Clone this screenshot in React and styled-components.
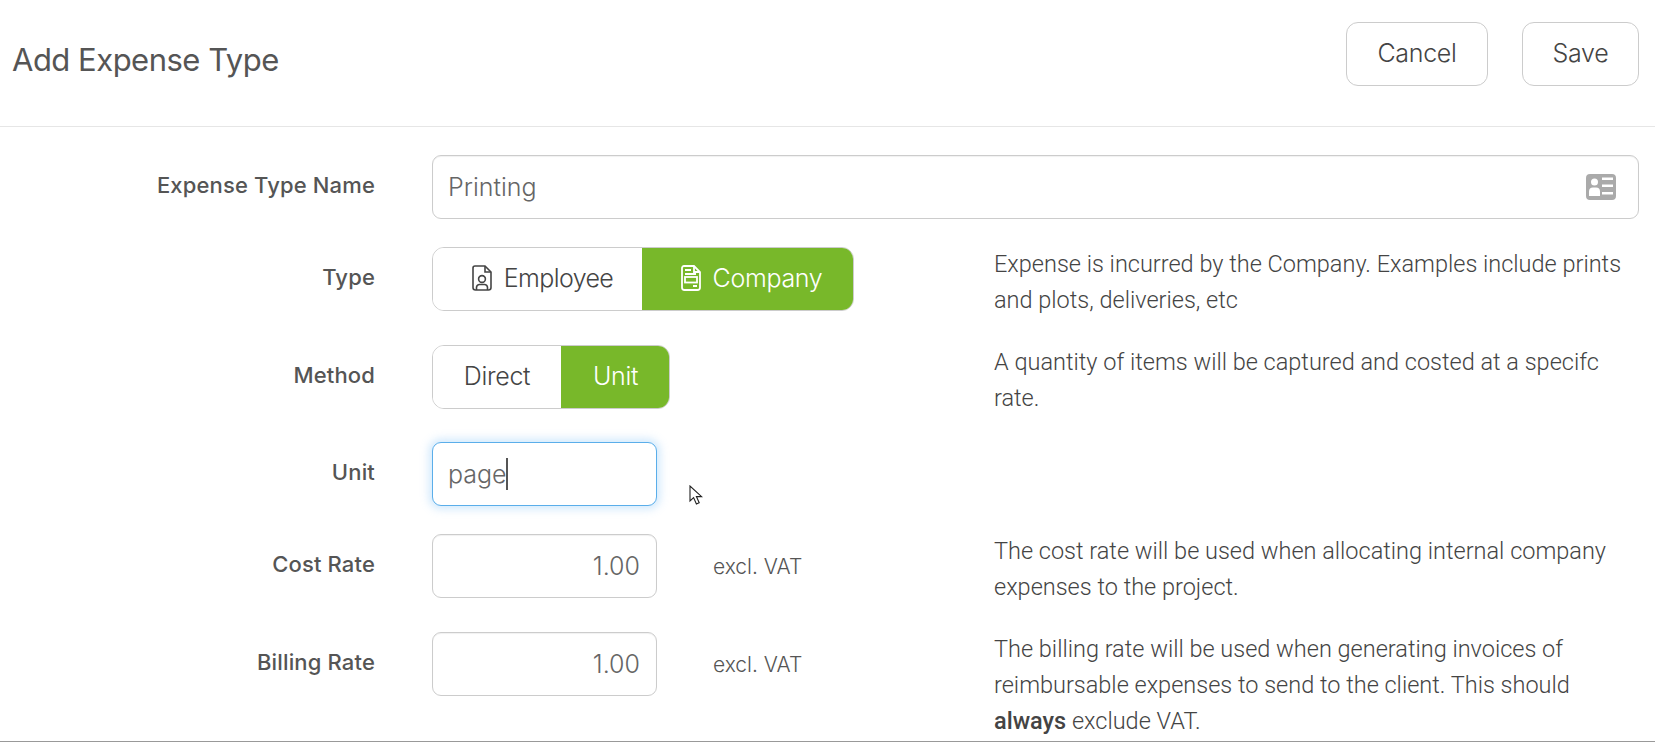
import React from 'react';
import styled, { createGlobalStyle } from 'styled-components';

const GlobalStyle = createGlobalStyle`
	html, body {
		margin: 0;
		padding: 0;
		background: #fff;
	}
	body {
		font-family: 'Inter', 'Liberation Sans', sans-serif;
		color: #555;
	}
`;

const Page = styled.div`
	position: relative;
	width: 1655px;
	height: 742px;
	box-sizing: border-box;
	border-bottom: 1px solid #999;
	overflow: hidden;
`;
const Header = styled.header`
	display: flex;
	align-items: flex-start;
	justify-content: space-between;
	height: 127px;
	box-sizing: border-box;
	padding: 22px 16px 0 12px;
	border-bottom: 1px solid #e6e6e6;
`;
const Title = styled.h1`
	margin: 16px 0 0;
	font-family: 'Inter', sans-serif;
	font-size: 31px;
	line-height: 44px;
	font-weight: 400;
	letter-spacing: -0.5px;
	color: #555;
`;
const Actions = styled.div`
	display: flex;
	gap: 34px;
`;
const HeaderButton = styled.button`
	width: ${props => props.$width}px;
	height: 64px;
	padding: 0 0 2px;
	box-sizing: border-box;
	border: 1px solid #ccc;
	border-radius: 12px;
	background: #fff;
	font-family: 'Inter', sans-serif;
	font-size: 25px;
	font-weight: 300;
	letter-spacing: -0.3px;
	color: #444;
`;
const Form = styled.div`
	display: grid;
	grid-template-columns: 375px 619px 645px;
	padding-top: 28px;
`;
const Label = styled.div`
	height: 60px;
	text-align: right;
	font-family: 'Inter', sans-serif;
	font-size: 22px;
	line-height: 60px;
	font-weight: 500;
	letter-spacing: 0.15px;
	color: #555;
`;
const Control = styled.div`
	display: flex;
	align-items: flex-start;
	padding-left: 57px;
	margin-bottom: ${props => props.$gap}px;
	${props => props.$wide && 'grid-column: 2 / 4;'}
`;
const Note = styled.p`
	margin: -1px 0 0;
	font-family: 'Roboto', sans-serif;
	font-size: 23.5px;
	line-height: 36px;
	font-weight: 300;
	color: #444;
	b {
		font-weight: 500;
	}
`;
const TextBox = styled.div`
	display: flex;
	align-items: center;
	justify-content: ${props => props.$align};
	width: ${props => props.$width}px;
	height: 64px;
	box-sizing: border-box;
	padding: 0 16px 0 15px;
	border: 1px solid ${props => (props.$focused ? '#5aaeea' : '#ccc')};
	border-radius: 9px;
	background: #fff;
	font-family: 'Inter', sans-serif;
	font-size: 25px;
	font-weight: 300;
	color: #666;
	box-shadow: ${props =>
		props.$focused
			? '0 0 8px 3px rgba(120, 190, 245, 0.35)'
			: 'inset 0 1px 1px rgba(0, 0, 0, 0.06)'};
`;
const Caret = styled.span`
	display: inline-block;
	width: 2px;
	height: 32px;
	margin-left: -1px;
	background: #555;
`;
const Suffix = styled.span`
	margin: 20px 0 0 56px;
	font-family: 'Inter', sans-serif;
	font-size: 21px;
	font-weight: 300;
	color: #555;
`;
const Toggle = styled.div`
	display: flex;
	height: 64px;
	box-sizing: border-box;
	border: 1px solid #ccc;
	border-radius: 12px;
	overflow: hidden;
`;
const ToggleOption = styled.div`
	display: flex;
	align-items: center;
	justify-content: center;
	gap: 12px;
	width: ${props => props.$width}px;
	margin: ${props => (props.$active ? '-1px -1px -1px 0' : '0')};
	padding: 0 0 3px ${props => props.$inset || 0}px;
	box-sizing: border-box;
	background: ${props => (props.$active ? '#78b82a' : '#fff')};
	color: ${props => (props.$active ? '#fff' : '#444')};
	font-family: 'Inter', sans-serif;
	font-size: 25px;
	font-weight: 300;
	letter-spacing: ${props => props.$tracking || -0.3}px;
`;
const CardIcon = styled.svg`
	width: 30px;
	height: 26px;
	flex: none;
	margin-right: 6px;
`;
const Cursor = styled.svg`
	position: absolute;
	left: 689px;
	top: 485px;
	width: 14px;
	height: 21px;
`;

const EmployeeIcon = () => (
	<svg width="20" height="26" viewBox="0 0 20 26" fill="none" stroke="currentColor" strokeWidth="1.6">
		<path d="M3 1h10l6 6v15.5a2.5 2.5 0 0 1-2.5 2.5h-13A2.5 2.5 0 0 1 1 22.5V3a2 2 0 0 1 2-2z" />
		<path d="M13 1v6h6" />
		<circle cx="10" cy="14" r="3.4" />
		<path d="M4.5 25v-2.5a3 3 0 0 1 3-3h5a3 3 0 0 1 3 3V25" />
	</svg>
);
const CompanyIcon = () => (
	<svg width="20" height="26" viewBox="0 0 20 26" fill="none" stroke="currentColor" strokeWidth="1.8">
		<path d="M3 1h10l6 6v15.5a2.5 2.5 0 0 1-2.5 2.5h-13A2.5 2.5 0 0 1 1 22.5V3a2 2 0 0 1 2-2z" />
		<path d="M13 1v6h6M4 5h6M4 9h11M12 21h4" />
		<rect x="4" y="12" width="12" height="5.5" />
	</svg>
);

const App = () => (
	<Page>
		<GlobalStyle />
		<Header>
			<Title>Add Expense Type</Title>
			<Actions>
				<HeaderButton $width={142}>Cancel</HeaderButton>
				<HeaderButton $width={117}>Save</HeaderButton>
			</Actions>
		</Header>
		<Form>
			<Label>Expense Type Name</Label>
			<Control $wide $gap={28}>
				<TextBox $width={1207} $align="space-between">
					Printing
					<CardIcon viewBox="0 0 30 26">
						<path
							fill="#aaa"
							fillRule="evenodd"
							d="M4 0h22a4 4 0 0 1 4 4v18a4 4 0 0 1-4 4H4a4 4 0 0 1-4-4V4a4 4 0 0 1 4-4zm4.5 4.5a3.5 3.5 0 1 0 0 7 3.5 3.5 0 0 0 0-7zM3 22h11v-4.5a4 4 0 0 0-4-4H7a4 4 0 0 0-4 4zM16 3.5V6h11V3.5zm0 7v2.5h11v-2.5zm0 7.5v2.5h11V18z"
						/>
					</CardIcon>
				</TextBox>
			</Control>

			<Label>Type</Label>
			<Control $gap={34}>
				<Toggle>
					<ToggleOption $width={209} $inset={10} $tracking={-0.6}>
						<EmployeeIcon />
						Employee
					</ToggleOption>
					<ToggleOption $width={212} $inset={7} $active>
						<CompanyIcon />
						Company
					</ToggleOption>
				</Toggle>
			</Control>
			<Note>
				Expense is incurred by the Company. Examples include prints and plots, deliveries, etc
			</Note>

			<Label>Method</Label>
			<Control $gap={33}>
				<Toggle>
					<ToggleOption $width={128}>Direct</ToggleOption>
					<ToggleOption $width={109} $active>
						Unit
					</ToggleOption>
				</Toggle>
			</Control>
			<Note>A quantity of items will be captured and costed at a specifc rate.</Note>

			<Label>Unit</Label>
			<Control $gap={28} $wide>
				<TextBox $width={225} $align="flex-start" $focused>
					page
					<Caret />
				</TextBox>
			</Control>

			<Label>Cost Rate</Label>
			<Control $gap={34}>
				<TextBox $width={225} $align="flex-end">
					1.00
				</TextBox>
				<Suffix>excl. VAT</Suffix>
			</Control>
			<Note>
				The cost rate will be used when allocating internal company expenses to the project.
			</Note>

			<Label>Billing Rate</Label>
			<Control $gap={0}>
				<TextBox $width={225} $align="flex-end">
					1.00
				</TextBox>
				<Suffix>excl. VAT</Suffix>
			</Control>
			<Note>
				The billing rate will be used when generating invoices of reimbursable expenses to send to
				the client. This should <b>always</b> exclude VAT.
			</Note>
		</Form>
		<Cursor viewBox="0 0 14 21">
			<path
				d="M1 1v15l3.6-3.4L7.4 19l2.8-1.2-2.8-6.2H12.6z"
				fill="#fff"
				stroke="#222"
				strokeWidth="1.1"
			/>
		</Cursor>
	</Page>
);

export default App;
